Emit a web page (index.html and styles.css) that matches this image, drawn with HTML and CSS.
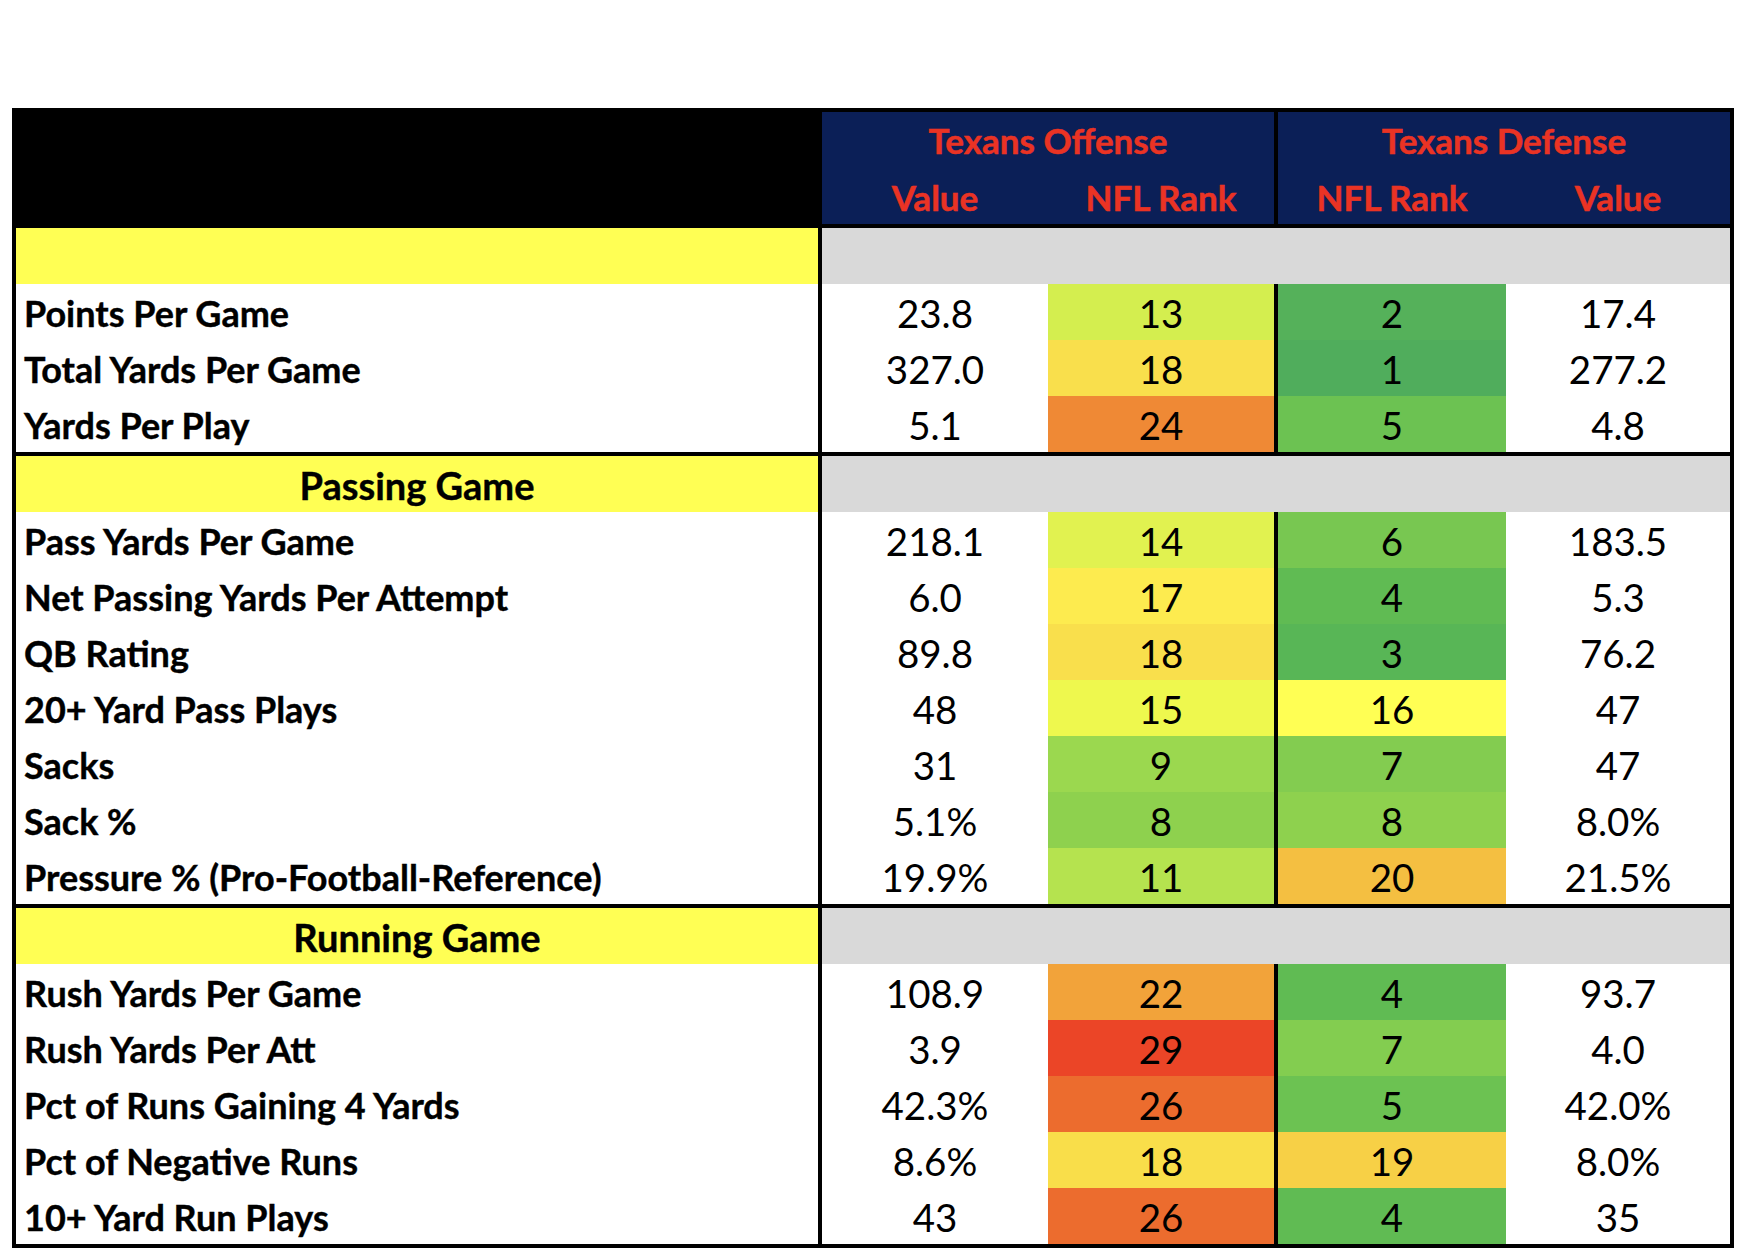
FILE: index.html
```html
<!DOCTYPE html>
<html lang="en">
<head>
<meta charset="utf-8">
<title>Texans Offense vs Defense</title>
<link rel="stylesheet" href="styles.css">
</head>
<body>
<div class="sheet">
  <div class="grid head">
    <div class="corner"></div>
    <div class="hcell team off">Texans Offense</div>
    <div class="hcell team def">Texans Defense</div>
    <div class="hcell sub">Value</div>
    <div class="hcell sub split">NFL Rank</div>
    <div class="hcell sub">NFL Rank</div>
    <div class="hcell sub">Value</div>
  </div>

  <div class="grid group">
    <div class="label section"></div><div class="gray"></div>
    <div class="label">Points Per Game</div><div class="num">23.8</div><div class="num split" style="background:#d4ee4f">13</div><div class="num" style="background:#55b15a">2</div><div class="num">17.4</div>
    <div class="label">Total Yards Per Game</div><div class="num">327.0</div><div class="num split" style="background:#f9df4c">18</div><div class="num" style="background:#50ad5c">1</div><div class="num">277.2</div>
    <div class="label">Yards Per Play</div><div class="num">5.1</div><div class="num split" style="background:#ef8935">24</div><div class="num" style="background:#6cc252">5</div><div class="num">4.8</div>
  </div>

  <div class="grid group">
    <div class="label section">Passing Game</div><div class="gray"></div>
    <div class="label">Pass Yards Per Game</div><div class="num">218.1</div><div class="num split" style="background:#e1f250">14</div><div class="num" style="background:#78c751">6</div><div class="num">183.5</div>
    <div class="label">Net Passing Yards Per Attempt</div><div class="num">6.0</div><div class="num split" style="background:#fdeb4f">17</div><div class="num" style="background:#60bb53">4</div><div class="num">5.3</div>
    <div class="label">QB Rating</div><div class="num">89.8</div><div class="num split" style="background:#f9df4c">18</div><div class="num" style="background:#58b656">3</div><div class="num">76.2</div>
    <div class="label">20+ Yard Pass Plays</div><div class="num">48</div><div class="num split" style="background:#eef84e">15</div><div class="num" style="background:#ffff54">16</div><div class="num">47</div>
    <div class="label">Sacks</div><div class="num">31</div><div class="num split" style="background:#9bd84f">9</div><div class="num" style="background:#83cc50">7</div><div class="num">47</div>
    <div class="label">Sack %</div><div class="num">5.1%</div><div class="num split" style="background:#8ed14e">8</div><div class="num" style="background:#8ed14e">8</div><div class="num">8.0%</div>
    <div class="label">Pressure % (Pro-Football-Reference)</div><div class="num">19.9%</div><div class="num split" style="background:#b5e34f">11</div><div class="num" style="background:#f4bf41">20</div><div class="num">21.5%</div>
  </div>

  <div class="grid group">
    <div class="label section">Running Game</div><div class="gray"></div>
    <div class="label">Rush Yards Per Game</div><div class="num">108.9</div><div class="num split" style="background:#f2a33a">22</div><div class="num" style="background:#60bb53">4</div><div class="num">93.7</div>
    <div class="label">Rush Yards Per Att</div><div class="num">3.9</div><div class="num split" style="background:#eb4527">29</div><div class="num" style="background:#83cd50">7</div><div class="num">4.0</div>
    <div class="label">Pct of Runs Gaining 4 Yards</div><div class="num">42.3%</div><div class="num split" style="background:#ec6c2e">26</div><div class="num" style="background:#6cc252">5</div><div class="num">42.0%</div>
    <div class="label">Pct of Negative Runs</div><div class="num">8.6%</div><div class="num split" style="background:#f9de4a">18</div><div class="num" style="background:#f7d046">19</div><div class="num">8.0%</div>
    <div class="label">10+ Yard Run Plays</div><div class="num">43</div><div class="num split" style="background:#ec6c2e">26</div><div class="num" style="background:#60bb53">4</div><div class="num">35</div>
  </div>
</div>
</body>
</html>
```

FILE: styles.css
```css
* { box-sizing: border-box; }

html, body {
  margin: 0;
  padding: 0;
  background: #ffffff;
}

body {
  font-family: Lato, "Open Sans", "Liberation Sans", sans-serif;
  color: #000000;
}

.sheet {
  margin: 108px 0 0 12px;
  width: 1722px;
  border: 4px solid #000000;
  background: #ffffff;
}

.grid {
  display: grid;
  grid-template-columns: 806px 226px 230px 228px 224px;
  grid-auto-rows: 56px;
}

.head {
  background: #0b1f57;
}

.corner {
  grid-row: 1 / span 2;
  grid-column: 1;
  background: #000000;
}

.hcell {
  display: flex;
  align-items: center;
  justify-content: center;
  color: #ea3324;
  font-weight: 700;
  font-size: 35px;
  -webkit-text-stroke: 0.5px #ea3324;
}

.team.off {
  grid-column: 2 / span 2;
  border-right: 4px solid #000000;
}

.team.def {
  grid-column: 4 / span 2;
}

.sub {
  font-size: 35px;
  padding-top: 2px;
}

.split {
  border-right: 4px solid #000000;
}

.group {
  border-top: 4px solid #000000;
}

.label {
  display: flex;
  align-items: center;
  padding: 1px 0 0 8px;
  font-weight: 700;
  font-size: 36px;
  -webkit-text-stroke: 0.4px #000000;
  border-right: 4px solid #000000;
  white-space: nowrap;
}

.label.section {
  background: #ffff54;
  justify-content: center;
  padding-left: 0;
  font-size: 38px;
}

.gray {
  grid-column: 2 / span 4;
  background: #d9d9d9;
}

.num {
  display: flex;
  align-items: center;
  justify-content: center;
  padding-top: 1px;
  font-size: 38.5px;
  font-weight: 400;
}
```
